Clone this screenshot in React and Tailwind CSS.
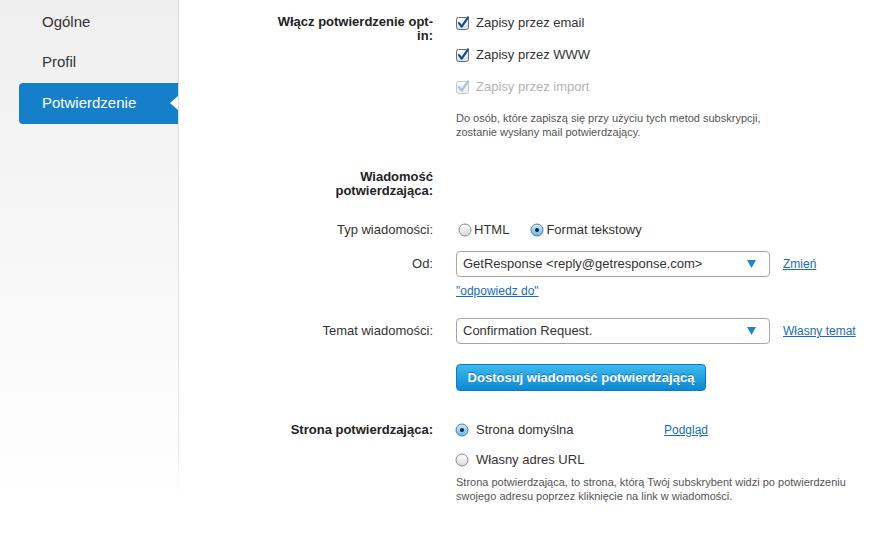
import React from "react";

function Checkbox({ disabled }) {
  const id = disabled ? "cbd" : "cb";
  return (
    <svg width="14" height="14" viewBox="0 0 14 14" className="shrink-0">
      <defs>
        <linearGradient id={id} x1="0" y1="0" x2="0" y2="1">
          <stop offset="0" stopColor={disabled ? "#fbfbfb" : "#ffffff"} />
          <stop offset="1" stopColor={disabled ? "#ececec" : "#d6dde4"} />
        </linearGradient>
      </defs>
      <rect x="0.5" y="1.5" width="12" height="12" rx="2" fill={`url(#${id})`} stroke={disabled ? "#c8c8c8" : "#6d6d6d"} />
      <path d="M3 7.2 L5.6 10.6 L12 1.5" stroke={disabled ? "#a9c2d8" : "#174f8f"} strokeWidth="2.2" fill="none" strokeLinecap="round" strokeLinejoin="round" />
    </svg>
  );
}

function Radio({ checked }) {
  const id = checked ? "rbon" : "rboff";
  return (
    <svg width="14" height="14" viewBox="0 0 14 14" className="shrink-0">
      <defs>
        <linearGradient id={id} x1="0" y1="0" x2="0" y2="1">
          <stop offset="0" stopColor={checked ? "#d3ebfa" : "#ffffff"} />
          <stop offset="1" stopColor={checked ? "#6ab7ea" : "#d9d9d9"} />
        </linearGradient>
      </defs>
      <circle cx="7" cy="7" r="6" fill={`url(#${id})`} stroke={checked ? "#4b7ea8" : "#8a8a8a"} />
      {checked && <circle cx="7" cy="7" r="2" fill="#1b2430" />}
    </svg>
  );
}

function Select({ value }) {
  return (
    <div className="flex items-center justify-between w-[314px] h-[26px] border border-[#a6a6a6] rounded-[4px] bg-white pl-[6px] pr-[13px] text-[13px] text-[#333]">
      <span>{value}</span>
      <svg width="9" height="8" viewBox="0 0 9 8">
        <path d="M0 0 H9 L4.5 8 Z" fill="#1b87c8" />
      </svg>
    </div>
  );
}

const linkCls = "text-[12px] text-[#1a6db3] underline";

export default function App() {
  return (
    <div className="flex w-[885px] h-[543px] bg-white font-['Liberation_Sans',Arial,sans-serif] overflow-hidden">
      {/* Sidebar */}
      <div className="flex w-[179px] shrink-0">
        <div className="w-[178px] bg-[linear-gradient(to_bottom,#efefef,#ffffff_93%)] pt-[2px]">
          <div className="h-[40px] flex items-center pl-[42px] text-[15px] text-[#333]">Ogólne</div>
          <div className="h-[40px] flex items-center pl-[42px] text-[15px] text-[#333]">Profil</div>
          <div className="relative mt-[1px] ml-[19px] h-[41px] flex items-center pl-[23px] text-[15px] text-white bg-[#1580c9] rounded-l-[4px]">
            Potwierdzenie
            <div className="absolute right-0 top-[13px] w-0 h-0 border-y-[7.5px] border-y-transparent border-r-[8px] border-r-white" />
          </div>
        </div>
        <div className="w-[1px] h-[500px] bg-[linear-gradient(to_bottom,#dadada,#e6e6e6_85%,#ffffff)]" />
      </div>

      {/* Main */}
      <div className="flex flex-col pl-[93px] text-[13px] text-[#333]">
        {/* Block 1 */}
        <div className="flex mt-[7px]">
          <div className="w-[161px] shrink-0 text-right font-bold text-[#222] leading-[14px] pt-[8px]">
            Włącz potwierdzenie opt-<br />in:
          </div>
          <div className="ml-[23px] flex flex-col">
            <div className="h-[32px] flex items-center gap-[6px]"><Checkbox /><span>Zapisy przez email</span></div>
            <div className="h-[32px] flex items-center gap-[6px]"><Checkbox /><span>Zapisy przez WWW</span></div>
            <div className="h-[32px] flex items-center gap-[6px] text-[#b3b3b3]"><Checkbox disabled /><span>Zapisy przez import</span></div>
            <div className="mt-[8px] text-[11px] leading-[14px] text-[#555]">
              Do osób, które zapiszą się przy użyciu tych metod subskrypcji,<br />
              zostanie wysłany mail potwierdzający.
            </div>
          </div>
        </div>

        {/* Block 2 */}
        <div className="flex mt-[31px]">
          <div className="w-[161px] shrink-0 text-right font-bold text-[#222] leading-[14px] pl-[40px]">
            Wiadomość potwierdzająca:
          </div>
        </div>

        {/* Block 3 */}
        <div className="flex items-center h-[20px] mt-[22px]">
          <div className="w-[161px] shrink-0 text-right">Typ wiadomości:</div>
          <div className="ml-[25px] flex items-center">
            <Radio /><span className="ml-[2px]">HTML</span>
            <span className="ml-[21px]"><Radio checked /></span><span className="ml-[2px]">Format tekstowy</span>
          </div>
        </div>

        {/* Block 4 */}
        <div className="flex items-center mt-[11px]">
          <div className="w-[161px] shrink-0 text-right">Od:</div>
          <div className="ml-[23px] flex items-center">
            <Select value="GetResponse <reply@getresponse.com>" />
            <a className={`${linkCls} ml-[13px]`}>Zmień</a>
          </div>
        </div>
        <div className="ml-[184px] mt-[7px] leading-[14px]">
          <a className={linkCls}>"odpowiedz do"</a>
        </div>

        {/* Block 5 */}
        <div className="flex items-center mt-[20px]">
          <div className="w-[161px] shrink-0 text-right">Temat wiadomości:</div>
          <div className="ml-[23px] flex items-center">
            <Select value="Confirmation Request." />
            <a className={`${linkCls} ml-[13px]`}>Własny temat</a>
          </div>
        </div>

        {/* Block 6 */}
        <div className="ml-[184px] mt-[20px]">
          <button className="w-[250px] h-[27px] rounded-[4px] border border-[#0b7cc0] bg-[linear-gradient(to_bottom,#3dbaf0,#0e88cf)] text-white font-bold text-[13px] [text-shadow:0_-1px_0_rgba(0,60,110,0.5)]">
            Dostosuj wiadomość potwierdzającą
          </button>
        </div>

        {/* Block 7 */}
        <div className="flex mt-[24px]">
          <div className="w-[161px] shrink-0 text-right font-bold text-[#222] h-[30px] flex items-center justify-end">
            Strona potwierdzająca:
          </div>
          <div className="ml-[22px] flex flex-col">
            <div className="h-[30px] flex items-center">
              <Radio checked /><span className="ml-[7px] w-[188px]">Strona domyślna</span>
              <a className={linkCls}>Podgląd</a>
            </div>
            <div className="h-[30px] flex items-center">
              <Radio /><span className="ml-[7px]">Własny adres URL</span>
            </div>
            <div className="ml-[1px] text-[11px] leading-[14px] text-[#555]">
              Strona potwierdzająca, to strona, którą Twój subskrybent widzi po potwierdzeniu<br />
              swojego adresu poprzez kliknięcie na link w wiadomości.
            </div>
          </div>
        </div>
      </div>
    </div>
  );
}
